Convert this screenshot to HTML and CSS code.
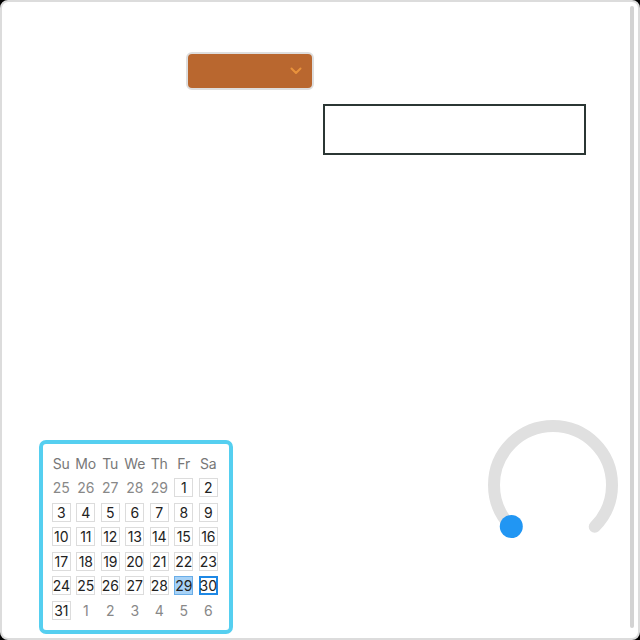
FILE: index.html
```html
<!DOCTYPE html>
<html>
<head>
<meta charset="utf-8">
<link rel="stylesheet" href="styles.css">
</head>
<body>
<div class="scrollbar"></div>
<div class="row-select">
  <div class="select">
    <svg class="chev" width="12" height="8" viewBox="0 0 12 8"><polyline points="1.5,1.5 6,6 10.5,1.5" fill="none" stroke="#e8923c" stroke-width="2" stroke-linecap="round" stroke-linejoin="round"/></svg>
  </div>
</div>
<div class="row-input">
  <div class="textbox"></div>
</div>
<div class="row-bottom">
  <div class="calendar">
    <div class="grid">
      <span class="hd">Su</span><span class="hd">Mo</span><span class="hd">Tu</span><span class="hd">We</span><span class="hd">Th</span><span class="hd">Fr</span><span class="hd">Sa</span>
      <span class="d out">25</span><span class="d out">26</span><span class="d out">27</span><span class="d out">28</span><span class="d out">29</span><span class="d"><b>1</b></span><span class="d"><b>2</b></span>
      <span class="d"><b>3</b></span><span class="d"><b>4</b></span><span class="d"><b>5</b></span><span class="d"><b>6</b></span><span class="d"><b>7</b></span><span class="d"><b>8</b></span><span class="d"><b>9</b></span>
      <span class="d"><b>10</b></span><span class="d"><b>11</b></span><span class="d"><b>12</b></span><span class="d"><b>13</b></span><span class="d"><b>14</b></span><span class="d"><b>15</b></span><span class="d"><b>16</b></span>
      <span class="d"><b>17</b></span><span class="d"><b>18</b></span><span class="d"><b>19</b></span><span class="d"><b>20</b></span><span class="d"><b>21</b></span><span class="d"><b>22</b></span><span class="d"><b>23</b></span>
      <span class="d"><b>24</b></span><span class="d"><b>25</b></span><span class="d"><b>26</b></span><span class="d"><b>27</b></span><span class="d"><b>28</b></span><span class="d"><b class="sel">29</b></span><span class="d"><b class="today">30</b></span>
      <span class="d"><b>31</b></span><span class="d out">1</span><span class="d out">2</span><span class="d out">3</span><span class="d out">4</span><span class="d out">5</span><span class="d out">6</span>
    </div>
  </div>
  <svg class="knob" width="134" height="122" viewBox="0 0 134 122">
    <path d="M25.28 108.72 A59 59 0 1 1 108.72 108.72" fill="none" stroke="#e0e0e0" stroke-width="12" stroke-linecap="round"/>
    <circle cx="25.3" cy="108.5" r="11.5" fill="#2196f3"/>
  </svg>
</div>
</body>
</html>
```
FILE: styles.css
```css
html {
  background: #000;
  margin: 0;
}
body {
  margin: 0;
  width: 640px;
  height: 640px;
  box-sizing: border-box;
  border: 2px solid #dcdcdc;
  border-radius: 8px;
  background: #fff;
  position: relative;
  display: flex;
  flex-direction: column;
  font-family: "Inter", "Open Sans", sans-serif;
  overflow: hidden;
}
.scrollbar {
  position: absolute;
  right: 4px;
  top: 4px;
  width: 4px;
  height: 622px;
  border-radius: 2px;
  background: #d3d3d3;
}
.row-select {
  display: flex;
  padding-left: 184px;
  margin-top: 50px;
}
.select {
  width: 128px;
  height: 38px;
  box-sizing: border-box;
  border: 2px solid #dedede;
  border-radius: 6px;
  background: #b9672f;
  display: flex;
  align-items: center;
  justify-content: flex-end;
  padding-right: 10px;
}
.chev {
  display: block;
}
.row-input {
  display: flex;
  padding-left: 321px;
  margin-top: 14px;
}
.textbox {
  width: 263px;
  height: 51px;
  box-sizing: border-box;
  border: 2px solid #2b3634;
  background: #fff;
}
.row-bottom {
  margin-top: auto;
  display: flex;
  justify-content: space-between;
  align-items: flex-end;
  padding: 0 18px 4px 37px;
}
.calendar {
  width: 194px;
  height: 194px;
  box-sizing: border-box;
  border: 4px solid #55cff0;
  border-radius: 7px;
  padding: 7px 6px 0 6px;
}
.grid {
  display: grid;
  grid-template-columns: repeat(7, 24.5px);
  grid-auto-rows: 24.5px;
}
.grid span {
  display: flex;
  align-items: center;
  justify-content: center;
  font-size: 14px;
  letter-spacing: -0.1px;
}
.hd {
  color: #777;
}
.out {
  color: #888;
}
.d b {
  font-weight: normal;
  color: #222;
  width: 19px;
  height: 19px;
  box-sizing: border-box;
  border: 1px solid #dcdcdc;
  display: flex;
  align-items: center;
  justify-content: center;
}
.d b.sel {
  background: #a7d2f7;
  border-color: #6aaee8;
}
.d b.today {
  border: 2px solid #1e88e5;
}
.knob {
  display: block;
  margin-bottom: 94px;
}
```
